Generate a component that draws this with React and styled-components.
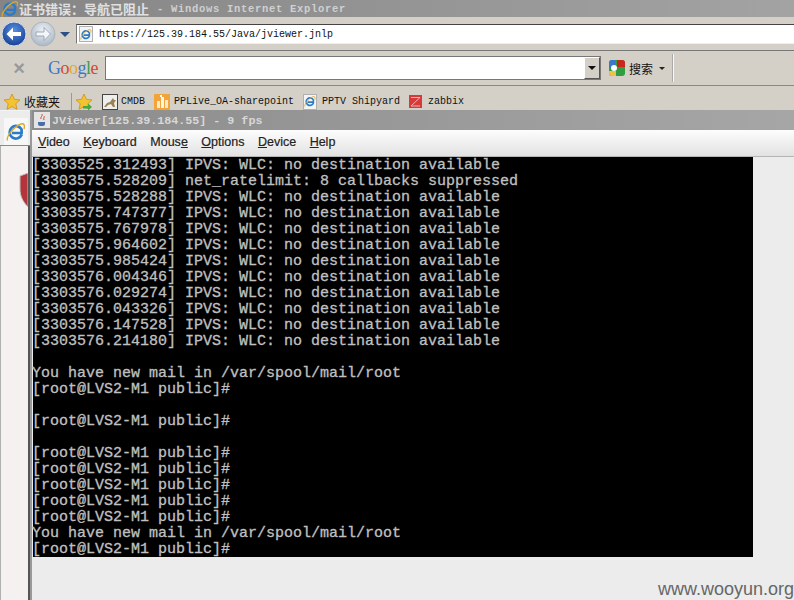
import React from 'react';
import styled, { createGlobalStyle } from 'styled-components';

const GlobalStyle = createGlobalStyle`
    html, body {
        margin: 0;
        padding: 0;
        background: #ececec;
    }
`;

const IeIcon = ({ size }) => (
    <svg width={size} height={size} viewBox="0 0 20 20">
        <path d="M15.800 12.500a6.300 6.300 0 11-.2-5V11H6" fill="none" stroke="#2a7ccb" strokeWidth="2.700" />
        <path d="M1.500 18.500C0 15 7 5 15 2c3-1 4 1 3 5" fill="none" stroke="#dba92e" strokeWidth="1.400" />
    </svg>
);

const ArrowIcon = ({ back }) => (
    <svg width="26" height="26" viewBox="0 0 26 26">
        <defs>
            <radialGradient id={back ? 'backFill' : 'nextFill'} cx="50%" cy="35%" r="70%">
                <stop offset="0" stopColor={back ? '#5a8fe0' : '#eef2f6'} />
                <stop offset="1" stopColor={back ? '#103a90' : '#a5b2c2'} />
            </radialGradient>
        </defs>
        <circle cx="13" cy="13" r="12" fill={`url(#${back ? 'backFill' : 'nextFill'})`} stroke={back ? '#d8dde4' : '#aeb4bb'} />
        <path
            d={back ? 'M20 11h-8V6.500L5.500 13l6.500 6.500V15h8z' : 'M6 11h8V6.500l6.500 6.500-6.500 6.500V15H6z'}
            fill={back ? '#fff' : '#f4f6f8'}
            stroke={back ? 'none' : '#8b98a8'}
            strokeWidth="0.8"
        />
    </svg>
);

const StarIcon = ({ plus }) => (
    <svg width="18" height="18" viewBox="0 0 18 18">
        <path d="M9 1l2.400 5.300 5.600.6-4.200 3.800 1.200 5.600L9 13.500l-5 2.800 1.200-5.600L1 6.900l5.600-.6z" fill="#f4c430" stroke="#c98a10" strokeWidth="0.7" />
        {plus && <path d="M8 13h5v-2.500l4 3.500-4 3.500V15.500H8z" fill="#46a83c" />}
    </svg>
);

const GoogleG = () => (
    <svg width="18" height="18" viewBox="0 0 18 18">
        <rect x="1" y="1" width="16" height="16" rx="3" fill="#2f9e41" />
        <path d="M9 1h5a3 3 0 013 3v4H9z" fill="#c9271c" />
        <path d="M1 4a3 3 0 013-3h3v8H1z" fill="#3b78c9" />
        <path d="M1 12h7v5H4a3 3 0 01-3-3z" fill="#eec14a" />
        <circle cx="6" cy="9" r="3" fill="#fff" />
    </svg>
);

const ShieldShape = () => (
    <svg width="9" height="34" viewBox="0 0 9 34">
        <path d="M9 0L1 3v13c0 7 3 13 8 18z" fill="#b5333a" stroke="#bdbdbd" />
    </svg>
);

const CmdbIcon = () => (
    <svg width="16" height="16" viewBox="0 0 16 16">
        <rect x="0.500" y="0.500" width="15" height="15" fill="#eeeeee" stroke="#444" />
        <path d="M2 13l3-4 3-1 3-4 1 2 2 0-2 3 1 4h-2l-2-3-3 1-2 2z" fill="#9a8350" />
    </svg>
);

const PpliveIcon = () => (
    <svg width="16" height="16" viewBox="0 0 16 16">
        <rect width="16" height="16" fill="#f2a33a" />
        <rect x="3" y="7" width="3" height="7" fill="#ffe9c4" />
        <rect x="7" y="3" width="3" height="11" fill="#fff5e0" />
        <rect x="11" y="6" width="3" height="8" fill="#ffe9c4" />
        <rect x="6" y="1" width="2" height="2" fill="#fff" />
    </svg>
);

const ZabbixIcon = () => (
    <svg width="13" height="13" viewBox="0 0 13 13">
        <rect width="13" height="13" fill="#d83a3a" />
        <path d="M2 2.500h9L2 11h9" fill="none" stroke="#f6d0d0" strokeWidth="0.8" />
    </svg>
);

const BOOT_LOG = [
    '[3303525.312493] IPVS: WLC: no destination available',
    '[3303575.528209] net_ratelimit: 8 callbacks suppressed',
    '[3303575.528288] IPVS: WLC: no destination available',
    '[3303575.747377] IPVS: WLC: no destination available',
    '[3303575.767978] IPVS: WLC: no destination available',
    '[3303575.964602] IPVS: WLC: no destination available',
    '[3303575.985424] IPVS: WLC: no destination available',
    '[3303576.004346] IPVS: WLC: no destination available',
    '[3303576.029274] IPVS: WLC: no destination available',
    '[3303576.043326] IPVS: WLC: no destination available',
    '[3303576.147528] IPVS: WLC: no destination available',
    '[3303576.214180] IPVS: WLC: no destination available',
    '',
    'You have new mail in /var/spool/mail/root',
    '[root@LVS2-M1 public]#',
    '',
    '[root@LVS2-M1 public]#',
    '',
    '[root@LVS2-M1 public]#',
    '[root@LVS2-M1 public]#',
    '[root@LVS2-M1 public]#',
    '[root@LVS2-M1 public]#',
    '[root@LVS2-M1 public]#',
    'You have new mail in /var/spool/mail/root',
    '[root@LVS2-M1 public]#',
];

const MENU = [
    ['V', 'ideo'],
    ['K', 'eyboard'],
    ['Mous', 'e', true],
    ['O', 'ptions'],
    ['D', 'evice'],
    ['H', 'elp'],
];

export default function App() {
    return (
        <Page>
            <GlobalStyle />
            <TitleBar>
                <IeIcon size={18} />
                <TitleCjk>证书错误：导航已阻止</TitleCjk>
                <TitleLatin>- Windows Internet Explorer</TitleLatin>
            </TitleBar>
            <NavBar>
                <ArrowIcon back />
                <ArrowIcon />
                <NavCaret />
                <AddressBox>
                    <PageIcon><IeIcon size={13} /></PageIcon>
                    <AddressText>https://125.39.184.55/Java/jviewer.jnlp</AddressText>
                </AddressBox>
            </NavBar>
            <GoogleBar>
                <CloseMark>×</CloseMark>
                <GoogleLogo>
                    <GLetter $c="#3b78c9">G</GLetter>
                    <GLetter $c="#d2492f">o</GLetter>
                    <GLetter $c="#e0a82e">o</GLetter>
                    <GLetter $c="#3b78c9">g</GLetter>
                    <GLetter $c="#3f9e4a">l</GLetter>
                    <GLetter $c="#d2492f">e</GLetter>
                </GoogleLogo>
                <SearchCombo>
                    <SearchInput />
                    <ComboButton><CaretDown /></ComboButton>
                </SearchCombo>
                <SearchAction>
                    <GoogleG />
                    <CjkLabel>搜索</CjkLabel>
                    <SmallCaret />
                    <Divider />
                </SearchAction>
            </GoogleBar>
            <FavBar>
                <StarIcon />
                <CjkLabel>收藏夹</CjkLabel>
                <FavDivider />
                <StarIcon plus />
                <FavItem $gap={3}>
                    <CmdbIcon />
                    <FavLabel>CMDB</FavLabel>
                </FavItem>
                <FavItem $gap={4}>
                    <PpliveIcon />
                    <FavLabel>PPLive_OA-sharepoint</FavLabel>
                </FavItem>
                <FavItem $gap={5}>
                    <PageIcon><IeIcon size={13} /></PageIcon>
                    <FavLabel>PPTV Shipyard</FavLabel>
                </FavItem>
                <FavItem $gap={6}>
                    <ZabbixIcon />
                    <FavLabel>zabbix</FavLabel>
                </FavItem>
            </FavBar>
            <TabStrip>
                <TabIcon><IeIcon size={20} /></TabIcon>
            </TabStrip>
            <ErrorPage>
                <ShieldSlot><ShieldShape /></ShieldSlot>
            </ErrorPage>

            <JViewerWindow>
                <WindowTitle>
                    <JavaBadge>
                        <svg width="14" height="14" viewBox="0 0 14 14">
                            <path d="M3 9h7v2a2 2 0 01-2 2H5a2 2 0 01-2-2z" fill="#4a6fa8" />
                            <path d="M7 1c1 2-2 3-1 5M9 3c1 1-1 2 0 4" fill="none" stroke="#d2492f" />
                        </svg>
                    </JavaBadge>
                    <WindowTitleText>JViewer[125.39.184.55] - 9 fps</WindowTitleText>
                </WindowTitle>
                <MenuBar>
                    {MENU.map(([a, b, mnemonicLast]) => (
                        <MenuItem key={a + b}>
                            {mnemonicLast ? <>{a}<u>{b}</u></> : <><u>{a}</u>{b}</>}
                        </MenuItem>
                    ))}
                </MenuBar>
                <Terminal>
                    {BOOT_LOG.map((line, i) => (
                        <TermLine key={i}>{line}</TermLine>
                    ))}
                </Terminal>
            </JViewerWindow>
            <Watermark>www.wooyun.org</Watermark>
        </Page>
    );
}

const Page = styled.div`
    position: relative;
    width: 794px;
    height: 600px;
    overflow: hidden;
    display: flex;
    flex-direction: column;
    background: #d4d0c8;
`;
const TitleBar = styled.div`
    height: 17px;
    display: flex;
    align-items: center;
    padding-left: 1px;
    background: linear-gradient(90deg, #858585, #a3a3a3);
    white-space: nowrap;
`;
const TitleCjk = styled.span`
    font: bold 13px "Noto Sans CJK SC", sans-serif;
    color: #e0e0e0;
`;
const TitleLatin = styled.span`
    margin-left: 8px;
    font: bold 10.500px "Liberation Mono", monospace;
    letter-spacing: 0.7px;
    color: #d0d0d0;
`;
const NavBar = styled.div`
    height: 34px;
    display: flex;
    align-items: center;
    gap: 3px;
    padding-left: 1px;
    border-bottom: 1px solid #777;
    box-sizing: border-box;
    background: #d4d0c8;
`;
const NavCaret = styled.span`
    width: 0;
    height: 0;
    margin: 2px 3px 0 1px;
    border: 5px solid transparent;
    border-top: 5px solid #2c4f86;
    border-bottom: 0;
`;
const AddressBox = styled.div`
    flex: 1;
    height: 20px;
    display: flex;
    align-items: center;
    margin-top: 1px;
    padding-left: 2px;
    background: #fff;
    border-top: 1px solid #444;
    border-left: 1px solid #777;
    border-bottom: 1px solid #f0f0f0;
    box-sizing: border-box;
`;
const PageIcon = styled.span`
    width: 14px;
    height: 16px;
    display: inline-flex;
    align-items: center;
    justify-content: center;
    background: #f4f4f4;
    border: 1px solid #b0b0b0;
    box-sizing: border-box;
    flex: none;
`;
const AddressText = styled.span`
    margin-left: 6px;
    font: 10px "Liberation Mono", monospace;
    color: #111;
`;
const GoogleBar = styled.div`
    height: 35px;
    display: flex;
    align-items: center;
    border-bottom: 1px solid #888;
    box-sizing: border-box;
    background: #d4d0c8;
`;
const CloseMark = styled.span`
    width: 38px;
    text-align: center;
    font: bold 20px "Liberation Sans", sans-serif;
    color: #999;
`;
const GoogleLogo = styled.span`
    width: 57px;
    margin-left: 10px;
    font: 18px "Liberation Serif", serif;
    letter-spacing: -0.5px;
`;
const GLetter = styled.span`
    color: ${p => p.$c};
`;
const SearchCombo = styled.div`
    width: 496px;
    height: 24px;
    display: flex;
    background: #fff;
    border: 1px solid #777;
    box-sizing: border-box;
`;
const SearchInput = styled.div`
    flex: 1;
`;
const ComboButton = styled.div`
    width: 16px;
    display: flex;
    align-items: center;
    justify-content: center;
    background: #d4d0c8;
    border: 1px solid #fff;
    border-right-color: #555;
    border-bottom-color: #555;
    box-sizing: border-box;
`;
const CaretDown = styled.span`
    width: 0;
    height: 0;
    border: 4px solid transparent;
    border-top: 4px solid #111;
    border-bottom: 0;
`;
const SearchAction = styled.div`
    display: flex;
    align-items: center;
    margin-left: 7px;
`;
const CjkLabel = styled.span`
    margin-left: 3px;
    font: 12px "Noto Sans CJK SC", sans-serif;
    color: #111;
`;
const SmallCaret = styled.span`
    width: 0;
    height: 0;
    margin-left: 6px;
    border: 3px solid transparent;
    border-top: 3px solid #222;
    border-bottom: 0;
`;
const Divider = styled.span`
    width: 1px;
    height: 28px;
    margin-left: 8px;
    background: #f8f8f8;
    box-shadow: -1px 0 0 #aaa;
`;
const FavBar = styled.div`
    height: 25px;
    display: flex;
    align-items: center;
    padding: 7px 0 0 3px;
    box-sizing: border-box;
    background: #d4d0c8;
    border-bottom: 1px solid #f4f4f4;
`;
const FavDivider = styled.span`
    width: 1px;
    height: 18px;
    margin: 0 3px 0 11px;
    background: #999;
`;
const FavItem = styled.span`
    display: inline-flex;
    align-items: center;
    gap: ${p => p.$gap}px;
    margin-left: 9px;
`;
const FavLabel = styled.span`
    font: 10px "Liberation Mono", monospace;
    color: #111;
`;
const TabStrip = styled.div`
    height: 35px;
    display: flex;
    align-items: flex-end;
    padding-left: 4px;
    box-sizing: border-box;
    background: #ececec;
    border-bottom: 1px solid #8a8a8a;
`;
const TabIcon = styled.span`
    width: 24px;
    height: 27px;
    display: flex;
    align-items: center;
    justify-content: center;
    background: #f7f7f7;
`;
const ErrorPage = styled.div`
    flex: 1;
    display: flex;
    justify-content: flex-end;
    width: 30px;
    background: #f6f1f1;
    border-left: 1px solid #b0b0b0;
    border-right: 2px solid #555;
    box-sizing: border-box;
`;
const ShieldSlot = styled.div`
    margin-top: 27px;
`;
const JViewerWindow = styled.div`
    position: absolute;
    left: 30px;
    top: 110px;
    right: 0;
    bottom: 0;
    display: flex;
    flex-direction: column;
    background: #ececec;
    border-left: 2px solid #999;
`;
const WindowTitle = styled.div`
    height: 20px;
    display: flex;
    align-items: center;
    padding-left: 2px;
    gap: 2px;
    background: linear-gradient(90deg, #8c8c8c, #a6a6a6);
`;
const JavaBadge = styled.span`
    width: 16px;
    height: 16px;
    display: flex;
    align-items: center;
    justify-content: center;
    background: #e4e4e4;
`;
const WindowTitleText = styled.span`
    margin-top: 2px;
    font: bold 11.700px "Liberation Mono", monospace;
    color: #d8d8d8;
`;
const MenuBar = styled.div`
    height: 27px;
    display: flex;
    align-items: center;
    gap: 13.500px;
    padding: 0 0 2px 6px;
    box-sizing: border-box;
    background: linear-gradient(#fdfdfd, #e2e2e2);
    border-bottom: 1px solid #b5b5b5;
`;
const MenuItem = styled.span`
    font: 12.500px "Liberation Sans", sans-serif;
    color: #222;
    -webkit-text-stroke: 0.2px #222;
`;
const Terminal = styled.div`
    width: 720px;
    height: 400px;
    margin-left: 1px;
    background: #000;
`;
const TermLine = styled.div`
    height: 16px;
    font: 15px/18px "Liberation Mono", monospace;
    color: #c0c0c0;
    -webkit-text-stroke: 0.3px #c0c0c0;
    white-space: pre;
    text-indent: -1px;
`;
const Watermark = styled.div`
    position: absolute;
    right: 0;
    bottom: 0;
    font: 18px "Liberation Sans", sans-serif;
    color: #666;
`;
